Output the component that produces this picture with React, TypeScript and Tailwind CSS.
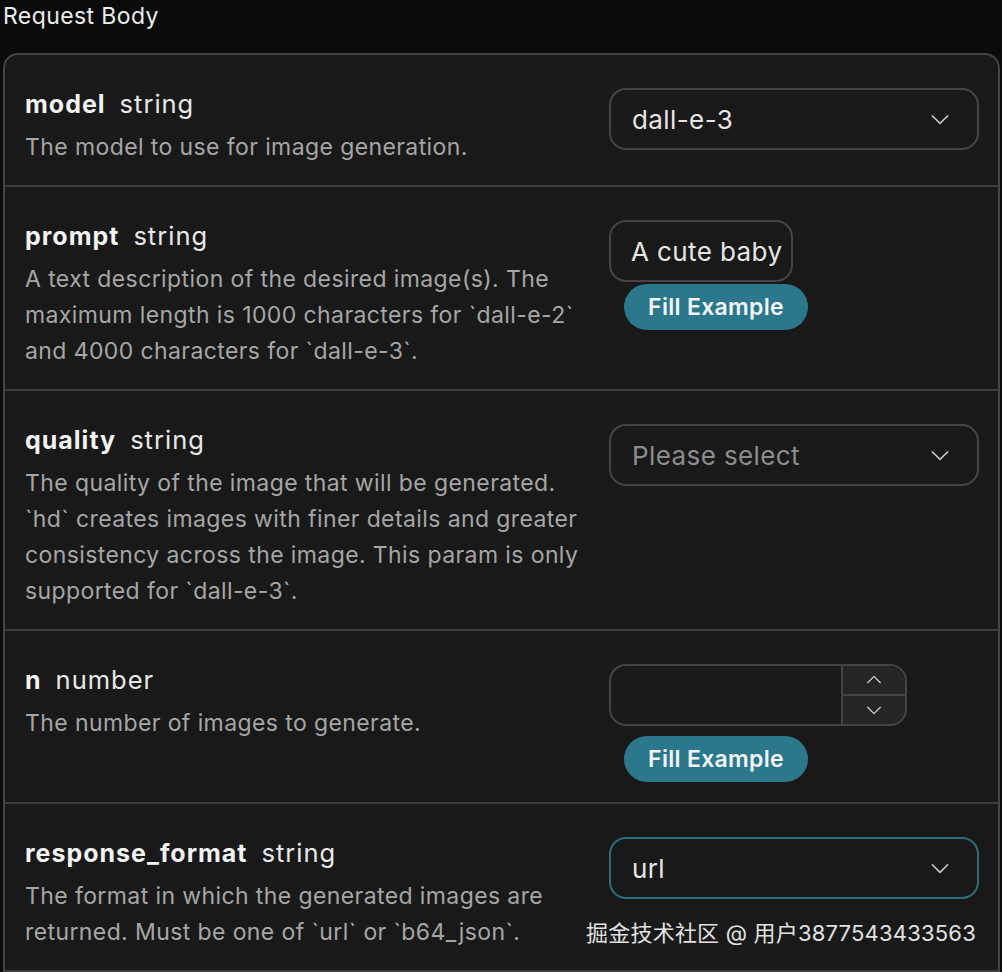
import React from "react";

const Chevron = ({ up = false, size = 20 }: { up?: boolean; size?: number }) => (
  <svg width={size} height={size} viewBox="0 0 20 20" fill="none" stroke="currentColor" strokeWidth="1.4" strokeLinecap="round" strokeLinejoin="round">
    {up ? <path d="M3 13l7-7 7 7" /> : <path d="M3 7l7 7 7-7" />}
  </svg>
);

function FillButton() {
  return (
    <button className="mt-[2px] ml-[15px] h-[46px] w-[184px] rounded-full bg-[#2b788c] text-[23px] font-semibold tracking-[0.3px] text-[#f2f4f5]">
      Fill Example
    </button>
  );
}

function Select({ value, placeholder, focused }: { value?: string; placeholder?: string; focused?: boolean }) {
  return (
    <div
      className={`flex h-[62px] w-[370px] items-center justify-between rounded-[17px] border-2 pl-[21px] pr-[26px] ${
        focused ? "border-[#2c6b7b]" : "border-[#444444]"
      }`}
    >
      <span className={`text-[26px] tracking-[0.4px] ${value ? "text-[#e6e6e6]" : "text-[#8c8c8c]"}`}>{value ?? placeholder}</span>
      <span className="text-[#c8c8c8]">
        <Chevron size={22} />
      </span>
    </div>
  );
}

function Row({
  name,
  type,
  desc,
  right,
}: {
  name: string;
  type: string;
  desc: string[];
  right: React.ReactNode;
}) {
  return (
    <div className="flex border-b-2 border-[#3b3b3b] pl-[20px] pt-[33px] pb-[20px]">
      <div className="w-[584px] shrink-0">
        <div className="flex items-baseline gap-[14px] leading-[32px]">
          <span className="text-[25px] font-bold tracking-[1px] text-[#f2f2f2]">{name}</span>
          <span className="text-[25.5px] tracking-[1px] text-[#e8e8e8]">{type}</span>
        </div>
        <div className="mt-[9px] text-[23px] leading-[36px] tracking-[0.4px] text-[#a6a6a6]">
          {desc.map((l, i) => (
            <div key={i} className="whitespace-nowrap">{l}</div>
          ))}
        </div>
      </div>
      <div className="flex flex-col items-start">{right}</div>
    </div>
  );
}

export default function App() {
  return (
    <div className="relative h-[972px] w-[1002px] overflow-hidden bg-[#0b0b0b]" style={{ fontFamily: "Inter, 'Noto Sans CJK SC', sans-serif" }}>
      <div className="pl-[3px] pt-[2px] text-[23px] leading-[28px] tracking-[0.4px] text-[#ececec]">Request Body</div>
      <div className="ml-[3px] mt-[23px] w-[997px] rounded-[15px] border-2 border-[#444444] bg-[#191919]">
        <Row
          name="model"
          type="string"
          desc={["The model to use for image generation."]}
          right={<Select value="dall-e-3" />}
        />
        <Row
          name="prompt"
          type="string"
          desc={[
            "A text description of the desired image(s). The",
            "maximum length is 1000 characters for `dall-e-2`",
            "and 4000 characters for `dall-e-3`.",
          ]}
          right={
            <>
              <div className="flex h-[62px] w-[184px] items-center rounded-[17px] border-2 border-[#444444] pl-[20px] pr-[2px]">
                <span className="overflow-hidden whitespace-nowrap text-[26px] tracking-[0.4px] text-[#e6e6e6]">A cute baby sea otter</span>
              </div>
              <FillButton />
            </>
          }
        />
        <Row
          name="quality"
          type="string"
          desc={[
            "The quality of the image that will be generated.",
            "`hd` creates images with finer details and greater",
            "consistency across the image. This param is only",
            "supported for `dall-e-3`.",
          ]}
          right={<Select placeholder="Please select" />}
        />
        <Row
          name="n"
          type="number"
          desc={["The number of images to generate."]}
          right={
            <>
              <div className="flex h-[62px] w-[298px] overflow-hidden rounded-[17px] border-2 border-[#444444]">
                <div className="flex-1" />
                <div className="flex w-[64px] flex-col border-l-2 border-[#444444] bg-[#242525] text-[#d0d0d0]">
                  <div className="flex flex-1 items-center justify-center border-b-2 border-[#444444]">
                    <Chevron up size={18} />
                  </div>
                  <div className="flex flex-1 items-center justify-center">
                    <Chevron size={18} />
                  </div>
                </div>
              </div>
              <div className="mt-[8px]">
                <FillButton />
              </div>
            </>
          }
        />
        <Row
          name="response_format"
          type="string"
          desc={["The format in which the generated images are", "returned. Must be one of `url` or `b64_json`."]}
          right={<Select value="url" focused />}
        />
        <div className="h-[40px]" />
      </div>
      <div className="absolute right-[26px] top-[916px] text-[22px] leading-[34px] tracking-[0.2px] text-[#e2e2e2]">
        掘金技术社区 @ 用户3877543433563
      </div>
    </div>
  );
}
